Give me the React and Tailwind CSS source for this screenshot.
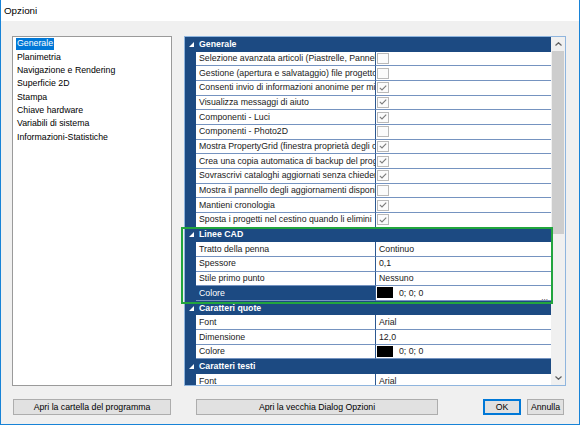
import React from "react";

const NAV = [
  "Generale",
  "Planimetria",
  "Navigazione e Rendering",
  "Superficie 2D",
  "Stampa",
  "Chiave hardware",
  "Variabili di sistema",
  "Informazioni-Statistiche",
];

const GEN = [
  ["Selezione avanzata articoli (Piastrelle, Pannelli, Profili)", false],
  ["Gestione (apertura e salvataggio) file progetto", false],
  ["Consenti invio di informazioni anonime per migliorare", true],
  ["Visualizza messaggi di aiuto", true],
  ["Componenti - Luci", true],
  ["Componenti - Photo2D", false],
  ["Mostra PropertyGrid (finestra proprietà degli oggetti)", true],
  ["Crea una copia automatica di backup del progetto", true],
  ["Sovrascrivi cataloghi aggiornati senza chiedere", true],
  ["Mostra il pannello degli aggiornamenti disponibili", false],
  ["Mantieni cronologia", true],
  ["Sposta i progetti nel cestino quando li elimini", true],
];

function Check({ checked }) {
  return (
    <div className="ml-[1px] w-[12px] h-[11px] border border-[#b9b9b9] bg-[#fbfbfb] flex items-center justify-center">
      {checked && (
        <svg width="8" height="6" viewBox="0 0 8 6">
          <path d="M0.8 2.8 L3 5 L7.2 0.6" fill="none" stroke="#7c7c7c" strokeWidth="1.1" />
        </svg>
      )}
    </div>
  );
}

function Header({ title }) {
  return (
    <div className="h-[14.67px] shrink-0 flex items-center text-white font-bold">
      <svg className="ml-[4px] mr-[5px]" width="5" height="5" viewBox="0 0 5 5">
        <path d="M5 0 L5 5 L0 5Z" fill="white" />
      </svg>
      {title}
    </div>
  );
}

function Row({ label, children, selected }) {
  return (
    <div className="h-[14.67px] shrink-0 flex">
      <div className="w-[11px] shrink-0" />
      <div
        className={
          "w-[180px] shrink-0 border-b border-r border-b-[#7593c0] border-r-[#2c5891] pl-[3px] flex items-center overflow-hidden whitespace-nowrap " +
          (selected ? "bg-[#1c4a82] text-white" : "bg-white text-[#1a1a1a]")
        }
      >
        {label}
      </div>
      <div className="flex-1 min-w-0 bg-white border-b border-b-[#7593c0] flex items-center overflow-hidden whitespace-nowrap text-[#1a1a1a]">
        {children}
      </div>
    </div>
  );
}

function Txt({ children }) {
  return <span className="pl-[3px]">{children}</span>;
}

function Swatch({ dots }) {
  return (
    <div className="flex items-center w-full h-full relative">
      <div className="ml-[1px] w-[16px] h-[11px] bg-black" />
      <span className="ml-[6px]">0; 0; 0</span>
      {dots && (
        <span className="absolute right-[3px] bottom-[-2px] text-[8px] leading-[8px]">...</span>
      )}
    </div>
  );
}

function Btn({ children, w, primary }) {
  return (
    <div
      className={
        "h-[16px] shrink-0 flex items-center justify-center bg-[#e1e1e1] text-black " +
        (primary ? "border-2 border-[#0078d7]" : "border border-[#adadad]")
      }
      style={{ width: w }}
    >
      {children}
    </div>
  );
}

export default function App() {
  return (
    <div className="w-[581px] h-[427px] bg-white relative font-['Liberation_Sans',Arial,sans-serif] text-[8.75px] leading-none">
      <div className="w-[580px] h-[425px] border-l border-r border-b border-[#1883d7] flex flex-col">
        <div className="h-[21px] shrink-0 bg-white flex items-center pl-[3px] text-[9.8px] text-black">
          Opzioni
        </div>
        <div className="flex-1 bg-[#f0f0f0] pt-[15px] pl-[11px] flex flex-col">
          <div className="flex gap-[12px]">
            <div className="w-[160px] h-[350px] border border-[#9a9a9a] bg-white">
              {NAV.map((n, i) => (
                <div key={n} className="h-[13.33px] flex items-center pl-[3px]">
                  <span
                    className={
                      "px-[1px] h-[12px] flex items-center " +
                      (i === 0 ? "bg-[#0078d7] text-white" : "text-black")
                    }
                  >
                    {n}
                  </span>
                </div>
              ))}
            </div>
            <div className="w-[382px] h-[350px] border border-[#8fb5de] flex">
              <div className="flex-1 min-w-0 bg-[#1c4a82] overflow-hidden flex flex-col">
                <Header title="Generale" />
                {GEN.map(([l, c]) => (
                  <Row key={l} label={l}>
                    <Check checked={c} />
                  </Row>
                ))}
                <Header title="Linee CAD" />
                <Row label="Tratto della penna">
                  <Txt>Continuo</Txt>
                </Row>
                <Row label="Spessore">
                  <Txt>0,1</Txt>
                </Row>
                <Row label="Stile primo punto">
                  <Txt>Nessuno</Txt>
                </Row>
                <Row label="Colore" selected>
                  <Swatch dots />
                </Row>
                <Header title="Caratteri quote" />
                <Row label="Font">
                  <Txt>Arial</Txt>
                </Row>
                <Row label="Dimensione">
                  <Txt>12,0</Txt>
                </Row>
                <Row label="Colore">
                  <Swatch />
                </Row>
                <Header title="Caratteri testi" />
                <Row label="Font">
                  <Txt>Arial</Txt>
                </Row>
                <Row label="Dimensione">
                  <Txt>12,0</Txt>
                </Row>
              </div>
              <div className="w-[14px] shrink-0 bg-[#f0f0f0] flex flex-col">
                <div className="h-[14px] flex items-center justify-center">
                  <svg width="7" height="4" viewBox="0 0 7 4">
                    <path d="M0.5 3.5 L3.5 0.7 L6.5 3.5" fill="none" stroke="#606060" strokeWidth="1.2" />
                  </svg>
                </div>
                <div className="mx-[1px] h-[183px] bg-[#cdcdcd]" />
                <div className="mt-auto h-[14px] flex items-center justify-center">
                  <svg width="7" height="4" viewBox="0 0 7 4">
                    <path d="M0.5 0.5 L3.5 3.3 L6.5 0.5" fill="none" stroke="#606060" strokeWidth="1.2" />
                  </svg>
                </div>
              </div>
            </div>
          </div>
          <div className="mt-[13px] ml-[1px] flex">
            <Btn w="158px">Apri la cartella del programma</Btn>
            <div className="ml-[25px]">
              <Btn w="242px">Apri la vecchia Dialog Opzioni</Btn>
            </div>
            <div className="ml-[45px]">
              <Btn w="38px" primary>OK</Btn>
            </div>
            <div className="ml-[6px]">
              <Btn w="37px">Annulla</Btn>
            </div>
          </div>
        </div>
      </div>
      <div className="absolute left-[181px] top-[227px] w-[372px] h-[77px] border-2 border-[#22a53e] pointer-events-none" />
    </div>
  );
}
